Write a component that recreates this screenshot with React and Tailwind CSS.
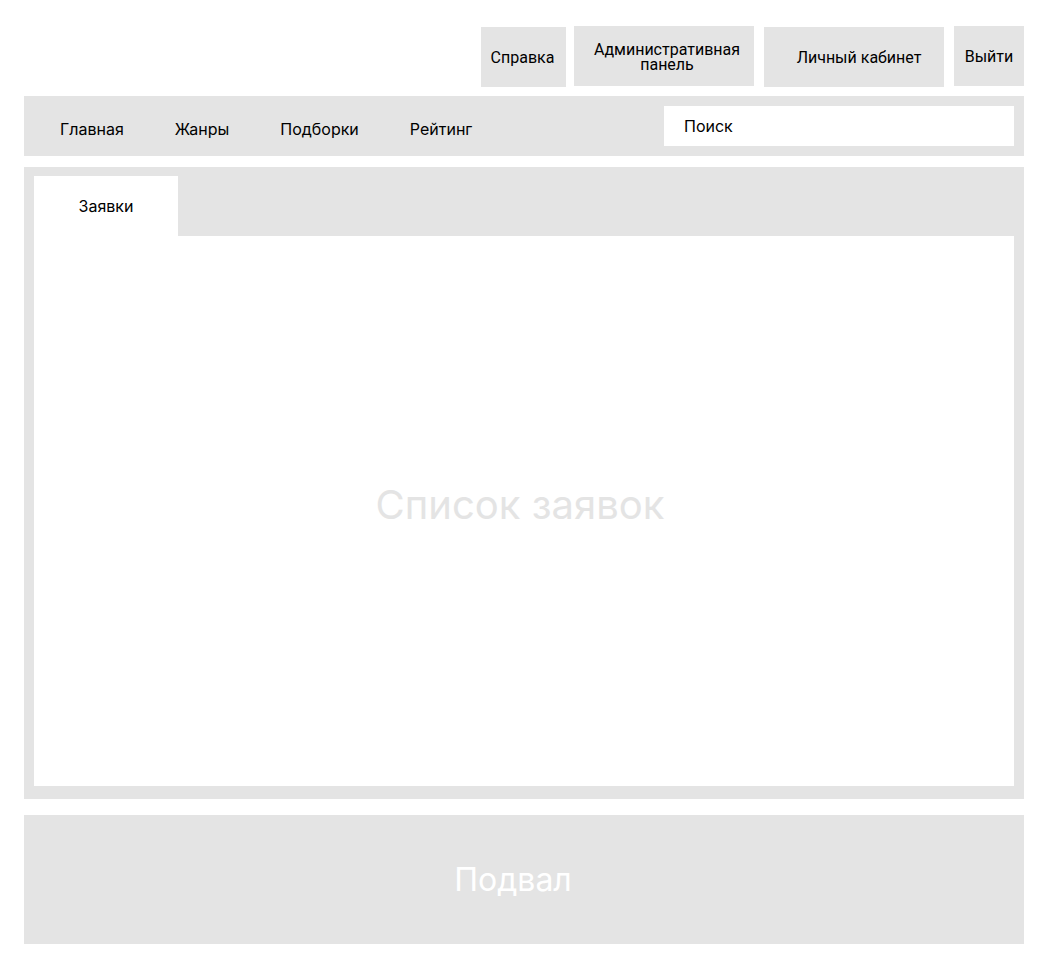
export default function App() {
  const navItems = ['Главная', 'Жанры', 'Подборки', 'Рейтинг']

  return (
    <div className="min-h-screen bg-white text-black" style={{ fontFamily: "Inter, 'Noto Sans', sans-serif" }}>
      <div className="w-[1000px] ml-[24px]">
        {/* top buttons */}
        <div className="flex justify-end items-start pt-[26px] text-[16px] font-['Roboto',sans-serif]">
          <div className="w-[85px] h-[60px] mt-[1px] pt-[2px] pr-[2px] bg-[#e4e4e4] flex items-center justify-center">Справка</div>
          <div className="w-[180px] h-[60px] ml-[8px] pl-[6px] pt-[2px] bg-[#e4e4e4] flex items-center justify-center text-center leading-[15px]">
            Административная<br />панель
          </div>
          <div className="w-[180px] h-[60px] mt-[1px] ml-[10px] pl-[10px] pt-[1px] bg-[#e4e4e4] flex items-center justify-center">Личный кабинет</div>
          <div className="w-[70px] h-[60px] ml-[10px] pt-[1px] bg-[#e4e4e4] flex items-center justify-center">Выйти</div>
        </div>

        {/* nav */}
        <nav className="mt-[9px] h-[60px] bg-[#e4e4e4] flex items-center justify-between pl-[36px] pr-[10px] text-[16px]">
          <ul className="flex gap-[51px] pt-[6px]">
            {navItems.map((item) => (
              <li key={item}>{item}</li>
            ))}
          </ul>
          <div className="w-[350px] h-[40px] bg-white flex items-center pl-[20px]">Поиск</div>
        </nav>

        {/* main */}
        <main className="mt-[11px] bg-[#e4e4e4] pt-[9px] px-[10px] pb-[13px]">
          <div className="w-[144px] h-[60px] bg-white flex items-center justify-center text-[16px]">Заявки</div>
          <div className="h-[550px] bg-white flex items-center justify-center pb-[12px] pr-[8px]">
            <span className="text-[40px] text-[#e4e4e4]">Список заявок</span>
          </div>
        </main>

        {/* footer */}
        <footer className="mt-[16px] h-[129px] bg-[#e4e4e4] flex items-center justify-center pr-[22px]">
          <span className="text-[32px] text-white">Подвал</span>
        </footer>
      </div>
    </div>
  )
}
